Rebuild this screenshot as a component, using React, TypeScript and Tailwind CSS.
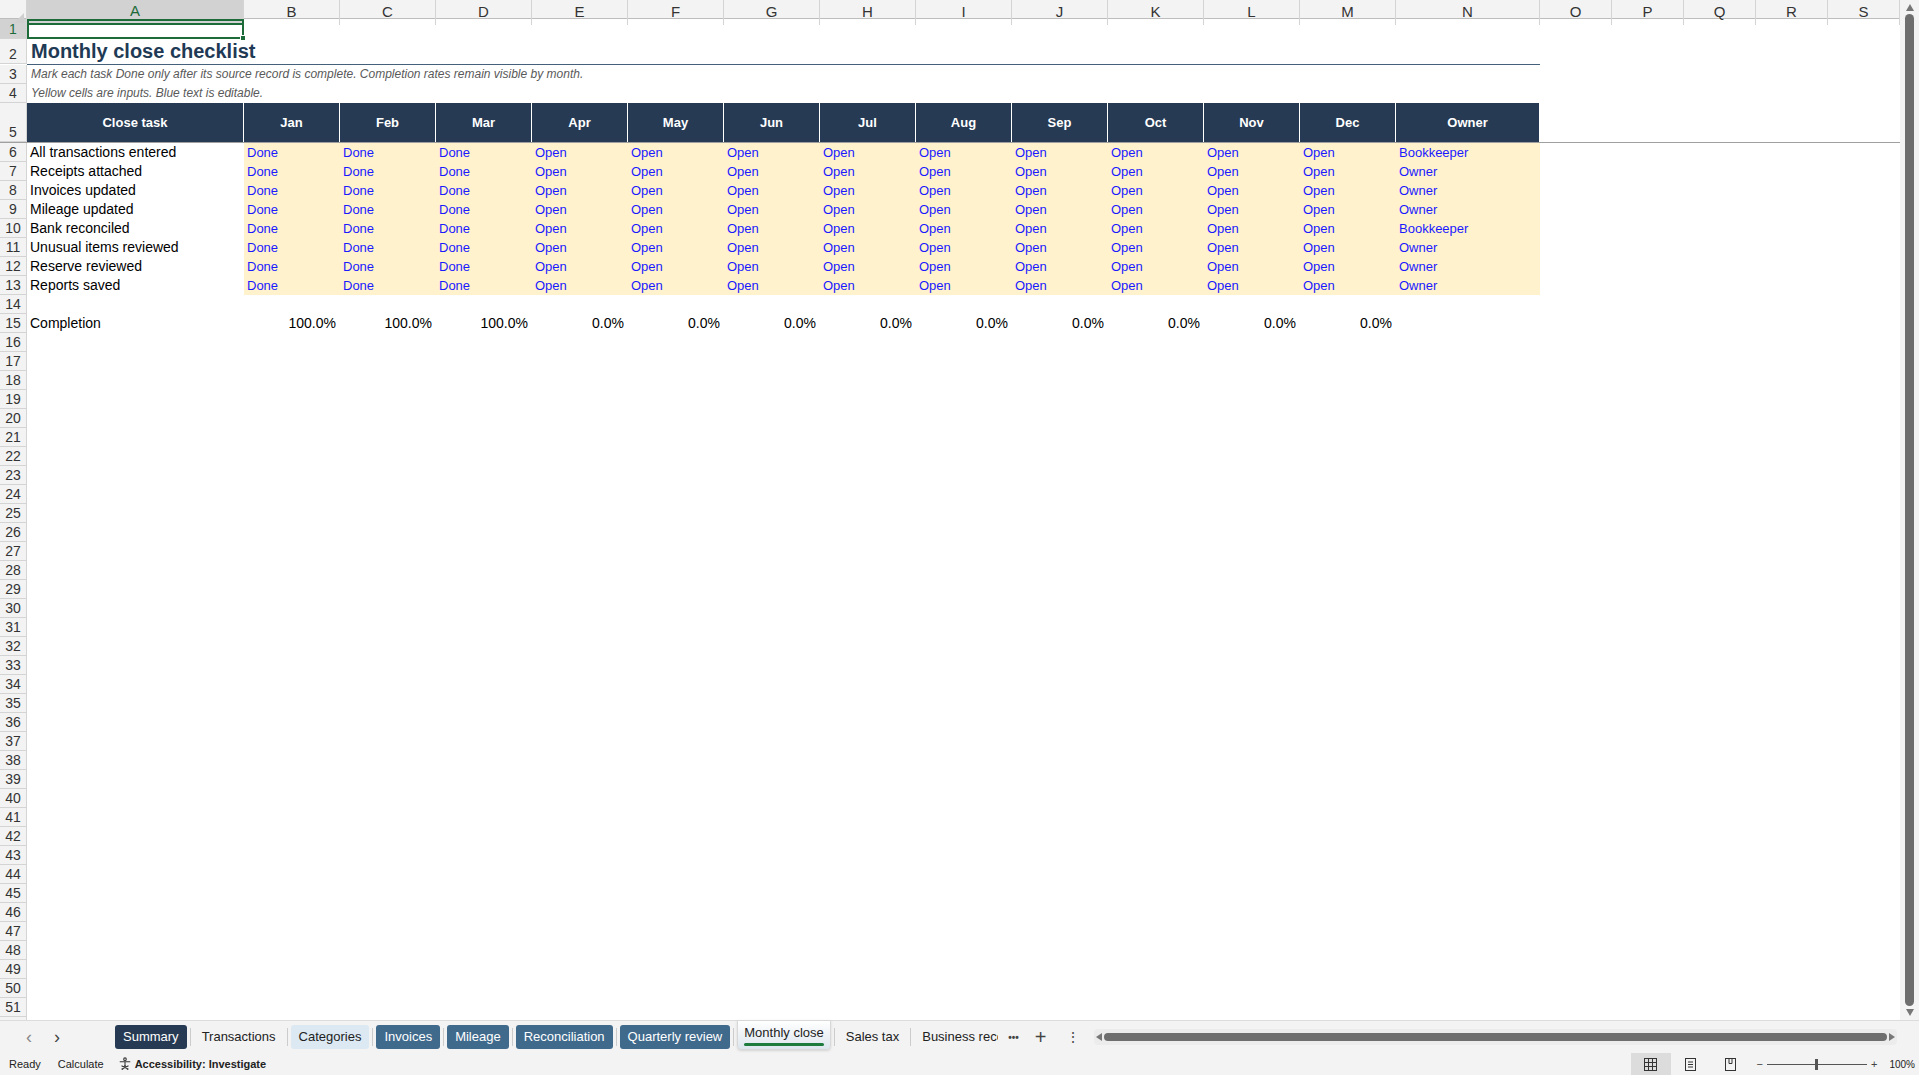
import React from "react";

const G = "grid grid-cols-[27px_217px_repeat(12,96px)_144px_repeat(5,72px)]";
const letters = ["A","B","C","D","E","F","G","H","I","J","K","L","M","N","O","P","Q","R","S"];
const months = ["Jan","Feb","Mar","Apr","May","Jun","Jul","Aug","Sep","Oct","Nov","Dec"];
const tasks: [string, string][] = [
  ["All transactions entered","Bookkeeper"],["Receipts attached","Owner"],["Invoices updated","Owner"],["Mileage updated","Owner"],
  ["Bank reconciled","Bookkeeper"],["Unusual items reviewed","Owner"],["Reserve reviewed","Owner"],["Reports saved","Owner"],
];

function RH({ n, h, sel }: { n: number; h: string; sel?: boolean }) {
  return (
    <div className={`${h} flex items-end justify-center border-b border-r border-[#d4d4d4] text-[14px] leading-[17px] ${sel ? "bg-[#d2d2d2] text-[#1e6b3a]" : "bg-[#f3f3f3] text-[#333]"}`}>{n}</div>
  );
}

function Tri({ d }: { d: string }) {
  return <svg width="8" height="7" viewBox="0 0 8 7"><path d={d} fill="#777" /></svg>;
}

export default function App() {
  const rows: React.ReactNode[] = [];
  for (let r = 16; r <= 52; r++) {
    rows.push(
      <div key={r} className={G}>
        <RH n={r} h="h-[19px]" />
        <div className="col-span-19" />
      </div>
    );
  }
  return (
    <div className="w-[1919px] h-[1075px] overflow-hidden flex flex-col bg-white font-[Liberation_Sans,Arial,sans-serif] text-black">
      <div className="flex flex-1 min-h-0">
        <div className="w-[1900px] overflow-hidden">
          <div className={`${G} h-[19px] bg-[#f3f3f3] border-b border-[#bdbdbd]`}>
            <div className="border-r border-[#d4d4d4] relative"><div className="absolute right-[2px] bottom-[2px] w-0 h-0 border-l-[10px] border-l-transparent border-b-[10px] border-b-[#cfcfcf]" /></div>
            {letters.map((l, i) => (
              <div key={l} className={`flex items-center justify-center border-r border-[#d4d4d4] text-[15px] ${i === 0 ? "bg-[#d2d2d2] text-[#1e6b3a] border-b-2 border-b-[#1e6b3a]" : "text-[#333]"}`}>{l}</div>
            ))}
          </div>
          <div className={G}>
            <RH n={1} h="h-[20px]" sel />
            <div className="border-2 border-[#1e6b3a] relative"><div className="absolute -right-[4px] -bottom-[4px] w-[6px] h-[6px] bg-[#1e6b3a] border border-white" /></div>
          </div>
          <div className={G}>
            <RH n={2} h="h-[25px]" />
            <div className="col-span-14 border-b border-[#44607a] flex items-end pl-[4px] pb-[1px] text-[20px] font-bold text-[#1f3a55] leading-[24px]">Monthly close checklist</div>
          </div>
          {[3, 4].map((n) => (
            <div key={n} className={G}>
              <RH n={n} h="h-[19px]" />
              <div className="col-span-14 flex items-end pl-[4px] pb-[1px] text-[12px] italic text-[#595959]">
                {n === 3 ? "Mark each task Done only after its source record is complete. Completion rates remain visible by month." : "Yellow cells are inputs. Blue text is editable."}
              </div>
            </div>
          ))}
          <div className={`${G} border-b border-[#a0a0a0]`}>
            <RH n={5} h="h-[39px]" />
            {["Close task", ...months, "Owner"].map((t) => (
              <div key={t} className="bg-[#263a53] text-white font-bold text-[13px] flex items-center justify-center border-r border-white">{t}</div>
            ))}
          </div>
          {tasks.map(([t, o], i) => (
            <div key={t} className={G}>
              <RH n={6 + i} h="h-[19px]" />
              <div className="pl-[3px] text-[14px] leading-[19px]">{t}</div>
              {months.map((m, j) => (
                <div key={m} className="bg-[#fff2cc] pl-[3px] text-[13px] leading-[19px] text-[#1a1aff]">{j < 3 ? "Done" : "Open"}</div>
              ))}
              <div className="bg-[#fff2cc] pl-[3px] text-[13px] leading-[19px] text-[#1a1aff]">{o}</div>
            </div>
          ))}
          <div className={G}><RH n={14} h="h-[19px]" /></div>
          <div className={G}>
            <RH n={15} h="h-[19px]" />
            <div className="pl-[3px] text-[14px] leading-[19px]">Completion</div>
            {months.map((m, j) => (
              <div key={m} className="text-right pr-[4px] text-[14px] leading-[19px]">{j < 3 ? "100.0%" : "0.0%"}</div>
            ))}
          </div>
          {rows}
        </div>
        <div className="w-[19px] bg-[#f3f3f3] flex flex-col items-center py-[4px]">
          <Tri d="M4 0L8 7H0z" />
          <div className="flex-1 w-[9px] my-[3px] rounded-full bg-[#6e6e6e]" />
          <Tri d="M0 0h8L4 7z" />
        </div>
      </div>
      <div className="h-[33px] bg-[#f3f3f3] border-t border-[#dcdcdc] flex items-center text-[13px]">
        <div className="w-[115px] flex items-center gap-[22px] pl-[26px] text-[#888] text-[18px]"><span>‹</span><span className="text-[#444]">›</span></div>
        <div className="flex items-center h-full">
          <div className="px-[8px] h-[24px] flex items-center rounded-[3px] bg-[#263a53] text-white">Summary</div>
          <div className="w-px h-[18px] bg-[#ccc] mx-[3px]" />
          <div className="px-[8px] h-[24px] flex items-center text-[#222]">Transactions</div>
          <div className="w-px h-[18px] bg-[#ccc] mx-[3px]" />
          <div className="px-[8px] h-[24px] flex items-center rounded-[3px] bg-[#dce9f3] text-[#222]">Categories</div>
          <div className="w-px h-[18px] bg-[#ccc] mx-[3px]" />
          <div className="px-[8px] h-[24px] flex items-center rounded-[3px] bg-[#3f6a8c] text-white">Invoices</div>
          <div className="w-px h-[18px] bg-[#ccc] mx-[3px]" />
          <div className="px-[8px] h-[24px] flex items-center rounded-[3px] bg-[#3f6a8c] text-white">Mileage</div>
          <div className="w-px h-[18px] bg-[#ccc] mx-[3px]" />
          <div className="px-[8px] h-[24px] flex items-center rounded-[3px] bg-[#3f6a8c] text-white">Reconciliation</div>
          <div className="w-px h-[18px] bg-[#ccc] mx-[3px]" />
          <div className="px-[8px] h-[24px] flex items-center rounded-[3px] bg-[#3f6a8c] text-white">Quarterly review</div>
          <div className="w-px h-[18px] bg-[#ccc] mx-[3px]" />
          <div className="px-[6px] h-[30px] -mt-[4px] flex flex-col items-center justify-center bg-gradient-to-b from-white to-[#dde6ee] border border-[#d8d8d8] rounded-b-[4px] shadow-sm text-[#222]">
            <span className="leading-[16px]">Monthly close</span>
            <div className="w-full h-[3px] bg-[#1e7b3e] rounded mt-[2px]" />
          </div>
          <div className="w-px h-[18px] bg-[#ccc] mx-[3px]" />
          <div className="px-[8px] h-[24px] flex items-center text-[#222]">Sales tax</div>
          <div className="w-px h-[18px] bg-[#ccc] mx-[3px]" />
          <div className="pl-[8px] w-[84px] overflow-hidden whitespace-nowrap h-[24px] flex items-center text-[#222]">Business records</div>
          <div className="ml-[10px] text-[10px] text-[#444] font-bold">•••</div>
          <div className="ml-[16px] text-[20px] text-[#444] font-light">+</div>
          <div className="ml-[20px] text-[14px] text-[#444]">⋮</div>
        </div>
        <div className="ml-[14px] flex-1 mr-[22px] h-[16px] flex items-center gap-[2px] rounded bg-[#ececec] px-[2px]">
          <svg width="6" height="8" viewBox="0 0 6 8"><path d="M6 0v8L0 4z" fill="#777" /></svg>
          <div className="flex-1 h-[8px] rounded-full bg-[#6e6e6e]" />
          <svg width="6" height="8" viewBox="0 0 6 8"><path d="M0 0v8l6-4z" fill="#777" /></svg>
        </div>
      </div>
      <div className="h-[22px] bg-[#f3f3f3] flex items-center text-[11px] text-[#222]">
        <span className="ml-[9px]">Ready</span>
        <span className="ml-[17px]">Calculate</span>
        <span className="ml-[14px] flex items-center gap-[3px] font-bold">
          <svg width="14" height="14" viewBox="0 0 16 16" fill="none" stroke="#333" strokeWidth="1.2"><circle cx="8" cy="2.5" r="1.5"/><path d="M2 5.5h12M8 5.5v4M8 9.5l-3 5M8 9.5l3 5M4 10l8 4M12 10l-8 4"/></svg>
          Accessibility: Investigate
        </span>
        <div className="ml-auto flex items-center h-full">
          <div className="w-[40px] h-full bg-[#dcdcdc] flex items-center justify-center">
            <svg width="13" height="13" viewBox="0 0 13 13" fill="none" stroke="#333"><rect x="0.5" y="0.5" width="12" height="12"/><path d="M4.5 0.5v12M8.5 0.5v12M0.5 4.5h12M0.5 8.5h12"/></svg>
          </div>
          <div className="w-[40px] flex justify-center">
            <svg width="11" height="13" viewBox="0 0 11 13" fill="none" stroke="#333"><rect x="0.5" y="0.5" width="10" height="12"/><path d="M3 4h5M3 6.5h5M3 9h5"/></svg>
          </div>
          <div className="w-[40px] flex justify-center">
            <svg width="11" height="13" viewBox="0 0 11 13" fill="none" stroke="#333"><rect x="0.5" y="0.5" width="10" height="12"/><path d="M4 0.5v5h3v-5"/></svg>
          </div>
          <span className="ml-[6px] text-[#444]">−</span>
          <div className="relative w-[100px] h-px bg-[#555] mx-[4px]"><div className="absolute left-[48px] -top-[5px] w-[3px] h-[11px] bg-[#555]" /></div>
          <span className="text-[#444]">+</span>
          <span className="ml-[12px] mr-[4px] text-[10px]">100%</span>
        </div>
      </div>
    </div>
  );
}
